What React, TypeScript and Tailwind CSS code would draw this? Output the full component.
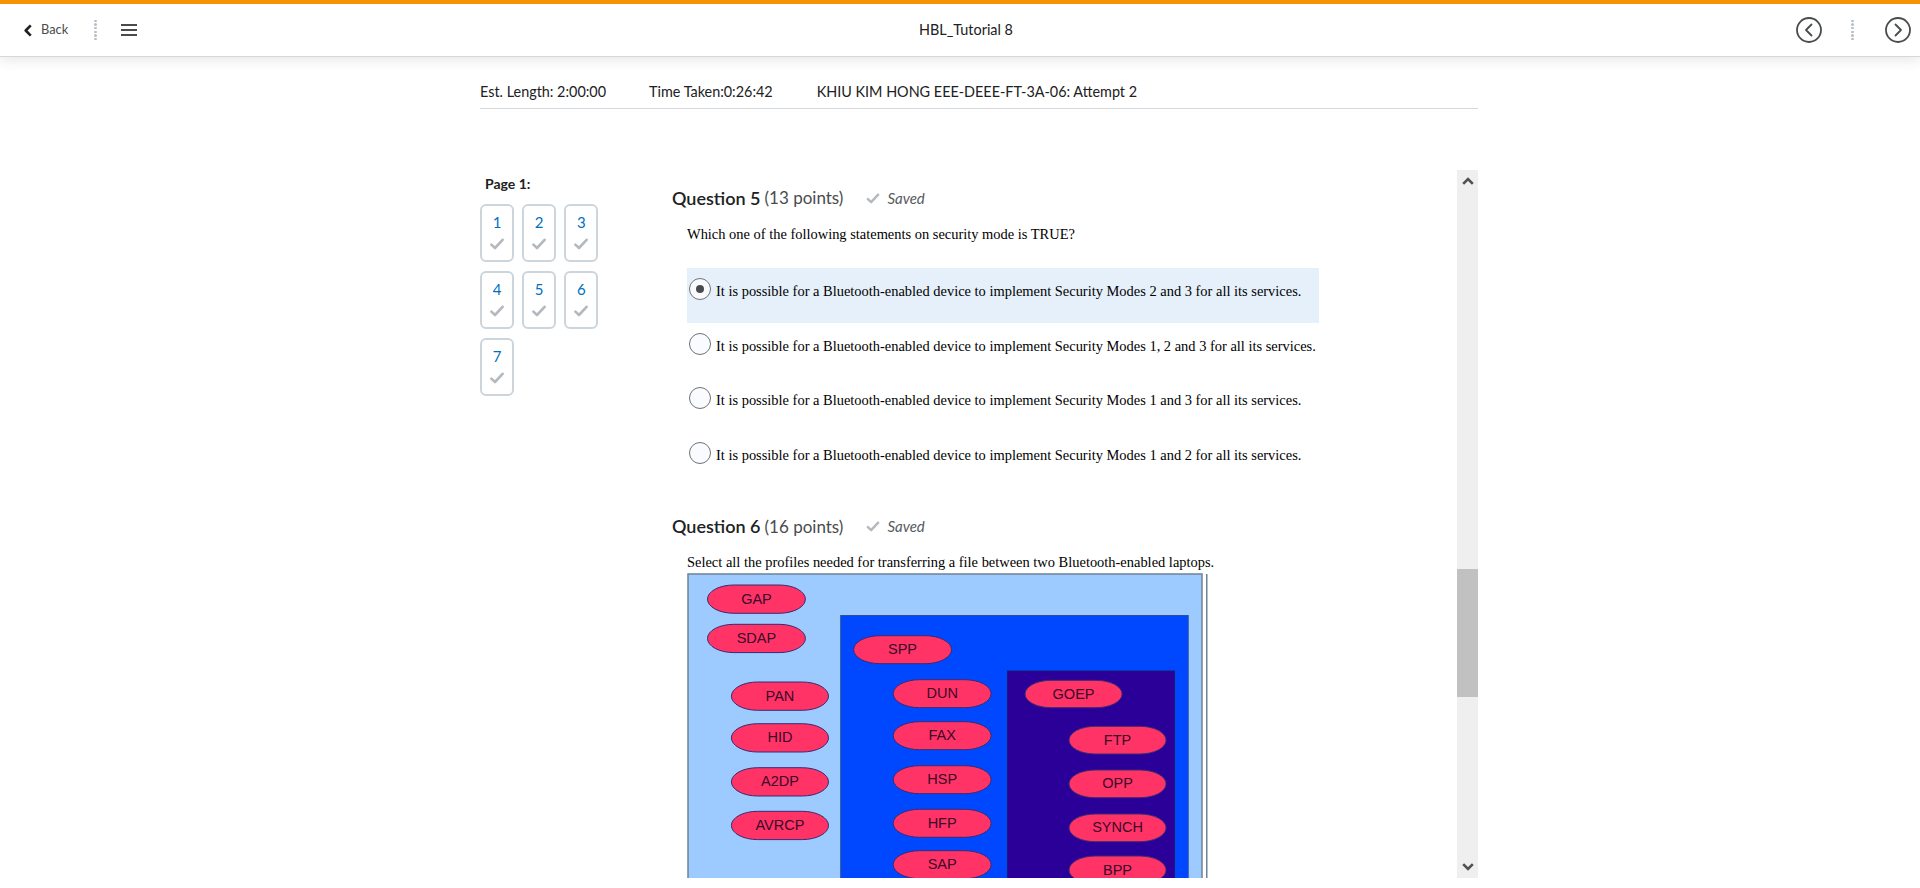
import React from "react";

const lato = { fontFamily: "Lato, 'Open Sans', sans-serif" };

function Dots() {
  return (
    <div className="flex h-[21px] w-[3px] flex-col justify-between">
      {[0, 1, 2, 3, 4, 5].map((i) => (
        <span key={i} className="block h-[2.5px] w-[2.5px] rounded-full bg-[#b5bec6]" />
      ))}
    </div>
  );
}

function CheckIcon({ className, color }: { className: string; color: string }) {
  return (
    <svg viewBox="0 0 14 12" className={className} fill="none">
      <path d="M1.4 6.6 L5 10 L12.6 1.8" stroke={color} strokeWidth="2.6" strokeLinecap="round" strokeLinejoin="round" />
    </svg>
  );
}

function CircleNav({ dir }: { dir: "l" | "r" }) {
  return (
    <svg viewBox="0 0 26 26" className="h-[26px] w-[26px]" fill="none">
      <circle cx="13" cy="13" r="12" stroke="#494c4e" strokeWidth="1.8" />
      <path
        d={dir === "l" ? "M15.5 7.5 L10 13 L15.5 18.5" : "M10.5 7.5 L16 13 L10.5 18.5"}
        stroke="#494c4e"
        strokeWidth="1.8"
        strokeLinecap="round"
        strokeLinejoin="round"
      />
    </svg>
  );
}

function Header() {
  return (
    <header className="relative z-10 flex h-[56px] border-t-4 border-[#f59300] bg-white shadow-[0_1px_0_#d6d9dc,0_4px_12px_rgba(0,0,0,0.10)]">
      <div className="flex w-[212px] items-center">
        <svg viewBox="0 0 10 14" className="ml-[23px] h-[13px] w-[10px]" fill="none">
          <path d="M8 1.5 L2.5 7 L8 12.5" stroke="#202122" strokeWidth="2.8" strokeLinejoin="round" />
        </svg>
        <span className="ml-[8px] text-[12.8px] text-[#494c4e]" style={lato}>Back</span>
        <div className="ml-[26px]"><Dots /></div>
        <div className="ml-[24px] flex h-[12px] w-[16px] flex-col justify-between">
          <span className="block h-[2px] bg-[#494c4e]" />
          <span className="block h-[2px] bg-[#494c4e]" />
          <span className="block h-[2px] bg-[#494c4e]" />
        </div>
      </div>
      <div className="flex flex-1 items-center justify-center text-[14.4px] text-[#202122]" style={lato}>HBL_Tutorial 8</div>
      <div className="flex w-[200px] items-center justify-end pr-[9px]">
        <CircleNav dir="l" />
        <div className="ml-[29px] mr-[31px]"><Dots /></div>
        <CircleNav dir="r" />
      </div>
    </header>
  );
}

function Tile({ n }: { n: number }) {
  return (
    <div className="flex h-[58px] w-[34px] flex-col items-center rounded-[6px] border-2 border-[#cdd5dc] pt-[6px]">
      <span className="text-[15px] leading-[20px] text-[#006fbf]" style={lato}>{n}</span>
      <CheckIcon className="mt-[6px] h-[12px] w-[14px]" color="#b3b9be" />
    </div>
  );
}

function Radio({ checked }: { checked?: boolean }) {
  return (
    <span className="flex h-[22px] w-[22px] shrink-0 items-center justify-center rounded-full border border-[#6e7376] bg-[#f9fbff]">
      {checked && <span className="block h-[8px] w-[8px] rounded-full bg-[#494c4e]" />}
    </span>
  );
}

function QuestionHeading({ n, pts }: { n: number; pts: number }) {
  return (
    <div className="flex h-[24px] items-center text-[#202122]" style={lato}>
      <span className="text-[18px] font-semibold">Question {n}</span>
      <span className="ml-[4px] text-[17px] text-[#494c4e]">({pts} points)</span>
      <CheckIcon className="ml-[23px] h-[11px] w-[14px]" color="#b3b9be" />
      <span className="ml-[7px] text-[15px] italic text-[#565a5c]">Saved</span>
    </div>
  );
}

const serif = { fontFamily: "'Liberation Serif', 'Times New Roman', serif" };

function Option({ text, checked }: { text: string; checked?: boolean }) {
  return (
    <div className={"flex h-[54.6px] w-[632px] items-start pl-[2px] pt-[10px] " + (checked ? "bg-[#e6f0fb]" : "")}>
      <Radio checked={checked} />
      <span className="ml-[5px] mt-[4px] whitespace-nowrap text-[14.45px] leading-[18px] text-black" style={serif}>{text}</span>
    </div>
  );
}

const pills: [string, number, number, number, number][] = [
  ["GAP", 707.5, 585, 97.9, 28.3],
  ["SDAP", 707.5, 624.3, 97.9, 28.3],
  ["PAN", 731.4, 682, 97.1, 28.3],
  ["HID", 731.4, 723.7, 97.1, 28.3],
  ["A2DP", 731.4, 767.7, 97.1, 28.3],
  ["AVRCP", 731.4, 811.3, 97.1, 28.3],
  ["SPP", 853.6, 635.7, 97.9, 28],
  ["DUN", 893.2, 679.7, 97.9, 28],
  ["FAX", 893.2, 721.7, 97.9, 28],
  ["HSP", 893.2, 765.7, 97.9, 28],
  ["HFP", 893.2, 809.3, 97.9, 28],
  ["SAP", 893.2, 850.7, 97.9, 28],
  ["GOEP", 1025, 680.3, 97.1, 27.4],
  ["FTP", 1069, 726.3, 97.1, 27.7],
  ["OPP", 1069, 770, 97.1, 27.7],
  ["SYNCH", 1069, 814, 97.1, 27.7],
  ["BPP", 1069, 856, 97.1, 28],
];

function Diagram() {
  return (
    <svg viewBox="687 573 522 400" className="block h-[400px] w-[522px] shrink-0">
      <rect x="688" y="574" width="514" height="400" fill="#9ecbff" stroke="#6f8297" strokeWidth="1.5" />
      <rect x="1206" y="574" width="1.5" height="400" fill="#6f8297" />
      <rect x="840.7" y="615.5" width="347.5" height="360" fill="#0048ff" stroke="#2c4f9e" strokeWidth="1" />
      <rect x="1007.5" y="671" width="167" height="305" fill="#2b0099" stroke="#1a1a70" strokeWidth="1" />
      {pills.map(([t, x, y, w, h]) => (
        <g key={t}>
          <rect x={x} y={y} width={w} height={h} rx={w * 0.27} ry={h / 2} fill="#ff3366" stroke="#3a2a70" strokeWidth="1" />
          <text
            x={x + w / 2}
            y={y + h / 2 + 4.6}
            textAnchor="middle"
            fontSize="14.5"
            fill="#3a0a2a"
            style={{ fontFamily: "'Liberation Sans', Arial, sans-serif" }}
          >
            {t}
          </text>
        </g>
      ))}
    </svg>
  );
}

function Scrollbar() {
  return (
    <div className="flex h-[708px] w-[21px] shrink-0 flex-col items-center bg-[#efefef]">
      <svg viewBox="0 0 12 8" className="mt-[7px] h-[8px] w-[12px]" fill="none">
        <path d="M1.2 6.8 L6 2 L10.8 6.8" stroke="#505050" strokeWidth="2.6" />
      </svg>
      <div className="mt-[384px] h-[128px] w-[21px] bg-[#c1c1c1]" />
      <div className="flex-1" />
      <svg viewBox="0 0 12 8" className="mb-[7px] h-[8px] w-[12px]" fill="none">
        <path d="M1.2 1.2 L6 6 L10.8 1.2" stroke="#505050" strokeWidth="2.6" />
      </svg>
    </div>
  );
}

const modes = ["2 and 3", "1, 2 and 3", "1 and 3", "1 and 2"];

export default function App() {
  return (
    <div className="h-[888px] w-[1920px] overflow-hidden bg-white">
      <Header />
      <div className="ml-[480px] w-[998px]">
        <div className="flex h-[53px] items-center border-b border-[#d3d9de] pt-[19px] text-[14.4px] text-[#202122]" style={lato}>
          <span>Est. Length: 2:00:00</span>
          <span className="ml-[43px]">Time Taken:0:26:42</span>
          <span className="ml-[44px]">KHIU KIM HONG EEE-DEEE-FT-3A-06: Attempt 2</span>
        </div>
        <div className="mt-[61px] flex h-[708px] overflow-hidden">
          <aside className="w-[192px] shrink-0">
            <div className="ml-[5px] mt-[5px] text-[14px] font-bold leading-[18px] text-[#202122]" style={lato}>Page 1:</div>
            <div className="mt-[11px] grid w-[118px] grid-cols-3 gap-x-[8.5px] gap-y-[9px]">
              {[1, 2, 3, 4, 5, 6, 7].map((n) => <Tile key={n} n={n} />)}
            </div>
          </aside>
          <main className="flex-1 overflow-hidden pt-[16px]">
            <QuestionHeading n={5} pts={13} />
            <p className="ml-[15px] mt-[15px] text-[14.45px] leading-[18px] text-black" style={serif}>
              Which one of the following statements on security mode is TRUE?
            </p>
            <div className="ml-[15px] mt-[25px]">
              {modes.map((m, i) => (
                <Option key={m} checked={i === 0} text={`It is possible for a Bluetooth-enabled device to implement Security Modes ${m} for all its services.`} />
              ))}
            </div>
            <div className="mt-[28px]"><QuestionHeading n={6} pts={16} /></div>
            <p className="ml-[15px] mt-[15px] text-[14.45px] leading-[18px] text-black" style={serif}>
              Select all the profiles needed for transferring a file between two Bluetooth-enabled laptops.
            </p>
            <div className="ml-[15px] mt-[2px]"><Diagram /></div>
          </main>
          <Scrollbar />
        </div>
      </div>
    </div>
  );
}
